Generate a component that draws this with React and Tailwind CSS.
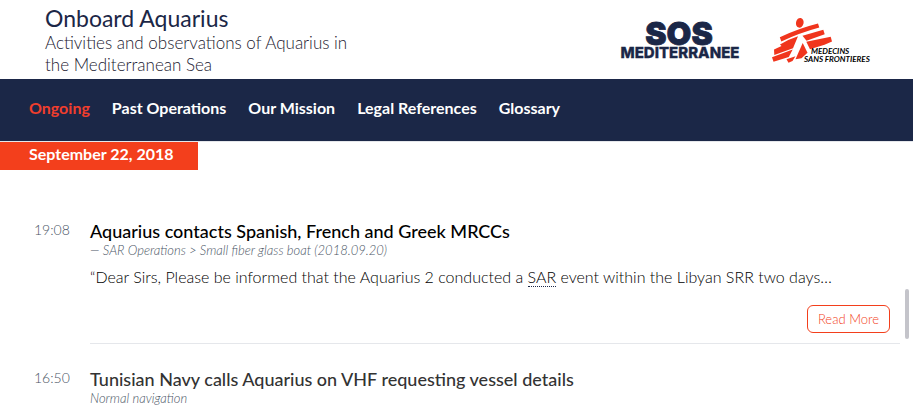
import clsx from "clsx";

const NAV_ITEMS = [
  { label: "Ongoing", active: true },
  { label: "Past Operations" },
  { label: "Our Mission" },
  { label: "Legal References" },
  { label: "Glossary" },
];

const SosLogo = () => (
  <a href="#sos" className="block text-[#1b2747]">
    <svg
      width="118"
      height="48"
      viewBox="0 0 118 48"
      fill="currentColor"
      stroke="currentColor"
      className="overflow-visible font-['Inter',sans-serif] font-black"
    >
      <text x="59" y="27" fontSize="32" strokeWidth="0.8" textAnchor="middle">SOS</text>
      <text x="60" y="40" fontSize="15" strokeWidth="0.3" fontWeight="800" textAnchor="middle">MEDITERRANEE</text>
    </svg>
  </a>
);

const MsfLogo = () => (
  <a href="#msf" className="block">
    <svg width="100" height="48" viewBox="0 0 100 48" className="overflow-visible">
      <g fill="#f0351d">
        <ellipse cx="27.800" cy="4.800" rx="3.800" ry="4.900" transform="rotate(12 27.800 4.800)" />
        <path d="M7.800 19.300 Q26 10.500 46 5.500 L47.300 9.500 Q27 15 9.300 23.500 Z" />
        <path d="M30.500 17.800 L51.300 11.800 L52.700 16.300 L34.500 22.700 Z" />
        <path d="M34.300 23.700 L58.700 18.800 L60 23.500 L52.500 26.800 L38 31.300 Z" />
        <path d="M2 31.500 L9.500 28 L8 26.500 Q16 21.500 26 18.300 L21 30.300 L2.300 37 Z" />
        <path d="M0 39.300 L20.700 31.500 L16.800 39 L1.500 43.800 Z" />
        <path d="M30.700 25 L35.500 34.800 L29.500 40.300 L23.500 41.300 Z" />
        <path d="M14.500 41.300 L23.500 38.300 L20.500 43 L16.500 44.800 Z" />
      </g>
      <g fill="#000" className="font-['Lato',sans-serif] font-bold italic">
        <text x="39" y="36" fontSize="8">MEDECINS</text>
        <text x="32" y="44" fontSize="8">SANS FRONTIERES</text>
      </g>
    </svg>
  </a>
);

const Header = () => (
  <header className="flex items-start justify-between pl-[45px] pr-[41px]">
    <div className="max-w-80 pt-1">
      <h1 className="text-[23px] leading-7 font-normal text-[#1b2747]">Onboard Aquarius</h1>
      <p className="text-[17px] leading-[22px] font-light text-[#1b2030] pb-[3px]">
        Activities and observations of Aquarius in the Mediterranean Sea
      </p>
    </div>
    <div className="flex items-start gap-[34px] pt-[18px]">
      <SosLogo />
      <MsfLogo />
    </div>
  </header>
);

const Nav = () => (
  <nav className="border-b border-gray-200 bg-[#1b2747]">
    <ul className="flex gap-[22px] px-[29px] pt-[17px] pb-[21px]">
      {NAV_ITEMS.map(({ label, active }) => (
        <li key={label}>
          <a
            href="#"
            className={clsx("block text-base leading-6 font-bold", active ? "text-[#f03e2d]" : "text-white")}
          >
            {label}
          </a>
        </li>
      ))}
    </ul>
  </nav>
);

const Entry = ({ time, title, titleClass, meta, children }) => (
  <article className="flex">
    <time className="w-[90px] shrink-0 pl-[34px] text-sm leading-[22px] font-light text-gray-600">{time}</time>
    <div className="min-w-0 grow">
      <h2 className={clsx("text-lg leading-6", titleClass)}>{title}</h2>
      <p className="text-[13px] leading-[14px] font-light text-gray-600 italic">{meta}</p>
      {children}
    </div>
  </article>
);

export default function App() {
  return (
    <div className="relative min-h-screen overflow-hidden bg-white font-['Lato','Open_Sans',sans-serif]">
      <Header />
      <Nav />
      <main>
        <div className="flex">
          <h2 className="bg-[#f33f1c] pr-6 pb-1 pl-[29px] text-base leading-6 font-bold text-white">
            September 22, 2018
          </h2>
        </div>
        <div className="flex flex-col gap-[23px] pt-[49px] pr-[13px]">
          <Entry
            time="19:08"
            title="Aquarius contacts Spanish, French and Greek MRCCs"
            titleClass="font-medium text-black"
            meta="— SAR Operations > Small fiber glass boat (2018.09.20)"
          >
            <p className="pt-2 text-base leading-6 font-light text-black">
              “Dear Sirs, Please be informed that the Aquarius 2 conducted a{" "}
              <abbr title="Search and Rescue" className="border-b border-dotted border-[#1b2747] no-underline">
                SAR
              </abbr>{" "}
              event within the Libyan SRR two days…
            </p>
            <div className="flex justify-end border-b border-gray-200 pt-4 pr-[10px] pb-[10px]">
              <button className="rounded-md border border-[#f33f1c] px-[10px] py-1 text-[13px] leading-[18px] font-light text-[#f33f1c]">
                Read More
              </button>
            </div>
          </Entry>
          <Entry
            time="16:50"
            title="Tunisian Navy calls Aquarius on VHF requesting vessel details"
            titleClass="font-medium text-[#333]"
            meta="Normal navigation"
          />
        </div>
      </main>
      <div className="absolute top-[289px] right-1 h-[50px] w-1 rounded-full bg-[#c4c4ca]" />
    </div>
  );
}
